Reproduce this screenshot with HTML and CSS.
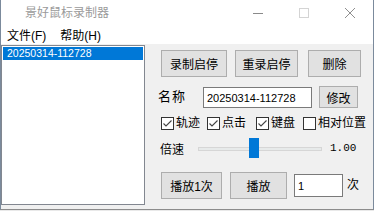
FILE: index.html
```html
<!DOCTYPE html>
<html lang="zh">
<head>
<meta charset="utf-8">
<title>景好鼠标录制器</title>
<link rel="stylesheet" href="styles.css">
</head>
<body>
<div class="window">
  <div class="titlebar">
    <div class="title">景好鼠标录制器</div>
    <div class="ctrl">
      <svg width="10" height="10" viewBox="0 0 10 10"><line x1="0" y1="5.5" x2="10" y2="5.5" stroke="#8a8a8a" stroke-width="1"/></svg>
    </div>
    <div class="ctrl">
      <svg width="10" height="10" viewBox="0 0 10 10"><rect x="0.5" y="0.5" width="9" height="9" fill="none" stroke="#d4d4d4" stroke-width="1"/></svg>
    </div>
    <div class="ctrl">
      <svg width="10" height="10" viewBox="0 0 10 10"><path d="M0 0 L10 10 M10 0 L0 10" stroke="#8f8f8f" stroke-width="1" fill="none"/></svg>
    </div>
  </div>
  <div class="menubar">
    <span class="menu-item">文件(F)</span>
    <span class="menu-item">帮助(H)</span>
  </div>
  <div class="client">
    <div class="list">
      <div class="list-item">20250314-112728</div>
    </div>
    <div class="panel">
      <div class="row row-buttons">
        <div class="btn w66">录制启停</div>
        <div class="btn w63 ml8">重录启停</div>
        <div class="btn w53 ml10">删除</div>
      </div>
      <div class="row row-name">
        <div class="name-label">名称</div>
        <div class="textbox name-box">20250314-112728</div>
        <div class="btn btn-small">修改</div>
      </div>
      <div class="row row-checks">
        <div class="cb w46"><span class="box"><svg width="11" height="11" viewBox="0 0 11 11"><path d="M1.5 5.5 L4 8 L9.5 2.5" fill="none" stroke="#444" stroke-width="1.1"/></svg></span><span class="cb-label">轨迹</span></div>
        <div class="cb w49"><span class="box"><svg width="11" height="11" viewBox="0 0 11 11"><path d="M1.5 5.5 L4 8 L9.5 2.5" fill="none" stroke="#444" stroke-width="1.1"/></svg></span><span class="cb-label">点击</span></div>
        <div class="cb w47"><span class="box"><svg width="11" height="11" viewBox="0 0 11 11"><path d="M1.5 5.5 L4 8 L9.5 2.5" fill="none" stroke="#444" stroke-width="1.1"/></svg></span><span class="cb-label">键盘</span></div>
        <div class="cb"><span class="box"></span><span class="cb-label">相对位置</span></div>
      </div>
      <div class="row row-speed">
        <div class="speed-label">倍速</div>
        <div class="slider">
          <div class="track"></div>
          <div class="thumb"></div>
        </div>
        <div class="speed-value">1.00</div>
      </div>
      <div class="row row-play">
        <div class="btn w61">播放1次</div>
        <div class="btn w57 ml8">播放</div>
        <div class="textbox count-box">1</div>
        <div class="times">次</div>
      </div>
    </div>
  </div>
</div>
</body>
</html>
```
FILE: styles.css
```css
body {
  margin: 0;
  width: 374px;
  height: 211px;
  overflow: hidden;
  background: #e9e9e9;
  font-family: "Liberation Sans", "Noto Sans CJK SC", sans-serif;
  font-size: 12px;
  color: #000;
}

.window {
  width: 374px;
  height: 210px;
  box-sizing: border-box;
  border-left: 1px solid #7b8a9c;
  border-right: 1px solid #7b8a9c;
  border-bottom: 1px solid #8c8c8c;
  background: #fff;
  display: flex;
  flex-direction: column;
}

.titlebar {
  height: 28px;
  display: flex;
  align-items: flex-start;
}

.title {
  flex: 1;
  padding-left: 24px;
  padding-top: 5px;
  color: #9a9a9a;
  font-size: 12px;
  line-height: 16px;
}

.ctrl {
  width: 46px;
  height: 28px;
  box-sizing: border-box;
  padding-top: 8px;
  display: flex;
  justify-content: center;
  align-items: flex-start;
}

.ctrl svg { display: block; }

.menubar {
  height: 16px;
  display: flex;
  align-items: center;
  padding-left: 6px;
  gap: 14px;
  line-height: 16px;
}

.client {
  flex: 1;
  background: #f0f0f0;
  display: flex;
  align-items: flex-start;
}

.list {
  margin-top: 1px;
  width: 144px;
  height: 160px;
  box-sizing: border-box;
  border: 1px solid #828790;
  background: #fff;
  padding: 1px;
}

.list-item {
  height: 13px;
  line-height: 13px;
  background: #0078d7;
  color: #fff;
  font-size: 10.5px;
  padding-left: 4px;
}

.panel {
  flex: 1;
  padding: 6px 0 0 13px;
  display: flex;
  flex-direction: column;
}

.row { display: flex; }

.btn {
  height: 27px;
  box-sizing: border-box;
  border: 1px solid #adadad;
  background: #e1e1e1;
  display: flex;
  align-items: center;
  justify-content: center;
  font-size: 12px;
}

.w66 { width: 66px; }
.w63 { width: 63px; }
.w53 { width: 53px; }
.w61 { width: 61px; }
.w57 { width: 57px; }
.ml8 { margin-left: 8px; }
.ml10 { margin-left: 10px; }

.row-buttons { margin-left: 3px; }

.row-name {
  margin-top: 9px;
  height: 22px;
  align-items: flex-start;
}

.name-label {
  width: 45px;
  height: 22px;
  line-height: 22px;
  font-size: 13px;
  letter-spacing: 1px;
}

.textbox {
  box-sizing: border-box;
  border: 1px solid #7a7a7a;
  background: #fff;
  font-size: 11px;
  display: flex;
  align-items: center;
}

.name-box {
  width: 109px;
  height: 21px;
  margin-top: 1px;
  padding-left: 3px;
}

.btn-small {
  width: 39px;
  height: 22px;
  margin-left: 7px;
}

.row-checks {
  margin-top: 9px;
  margin-left: 3px;
  height: 13px;
  align-items: center;
}

.cb {
  display: flex;
  align-items: center;
  height: 13px;
}

.w46 { width: 46px; }
.w49 { width: 49px; }
.w47 { width: 47px; }

.box {
  width: 13px;
  height: 13px;
  box-sizing: border-box;
  border: 1px solid #333;
  background: #fff;
  display: flex;
  align-items: center;
  justify-content: center;
}

.box svg { display: block; }

.cb-label {
  margin-left: 2px;
  line-height: 13px;
}

.row-speed {
  margin-top: 8px;
  margin-left: 2px;
  height: 20px;
  align-items: center;
}

.speed-label { width: 38px; }

.slider {
  position: relative;
  width: 124px;
  height: 20px;
}

.track {
  margin-top: 9px;
  height: 4px;
  box-sizing: border-box;
  border: 1px solid #d6d6d6;
  background: #e7eaea;
}

.thumb {
  position: absolute;
  left: 51px;
  top: 0;
  width: 10px;
  height: 20px;
  background: #0078d7;
}

.speed-value {
  margin-left: 8px;
  font-family: "Liberation Mono", monospace;
  font-size: 11px;
}

.row-play {
  margin-top: 14px;
  margin-left: 3px;
  align-items: flex-start;
}

.count-box {
  width: 49px;
  height: 23px;
  margin-left: 7px;
  margin-top: 2px;
  padding-left: 3px;
}

.times {
  margin-left: 4px;
  height: 27px;
  line-height: 27px;
}
```
